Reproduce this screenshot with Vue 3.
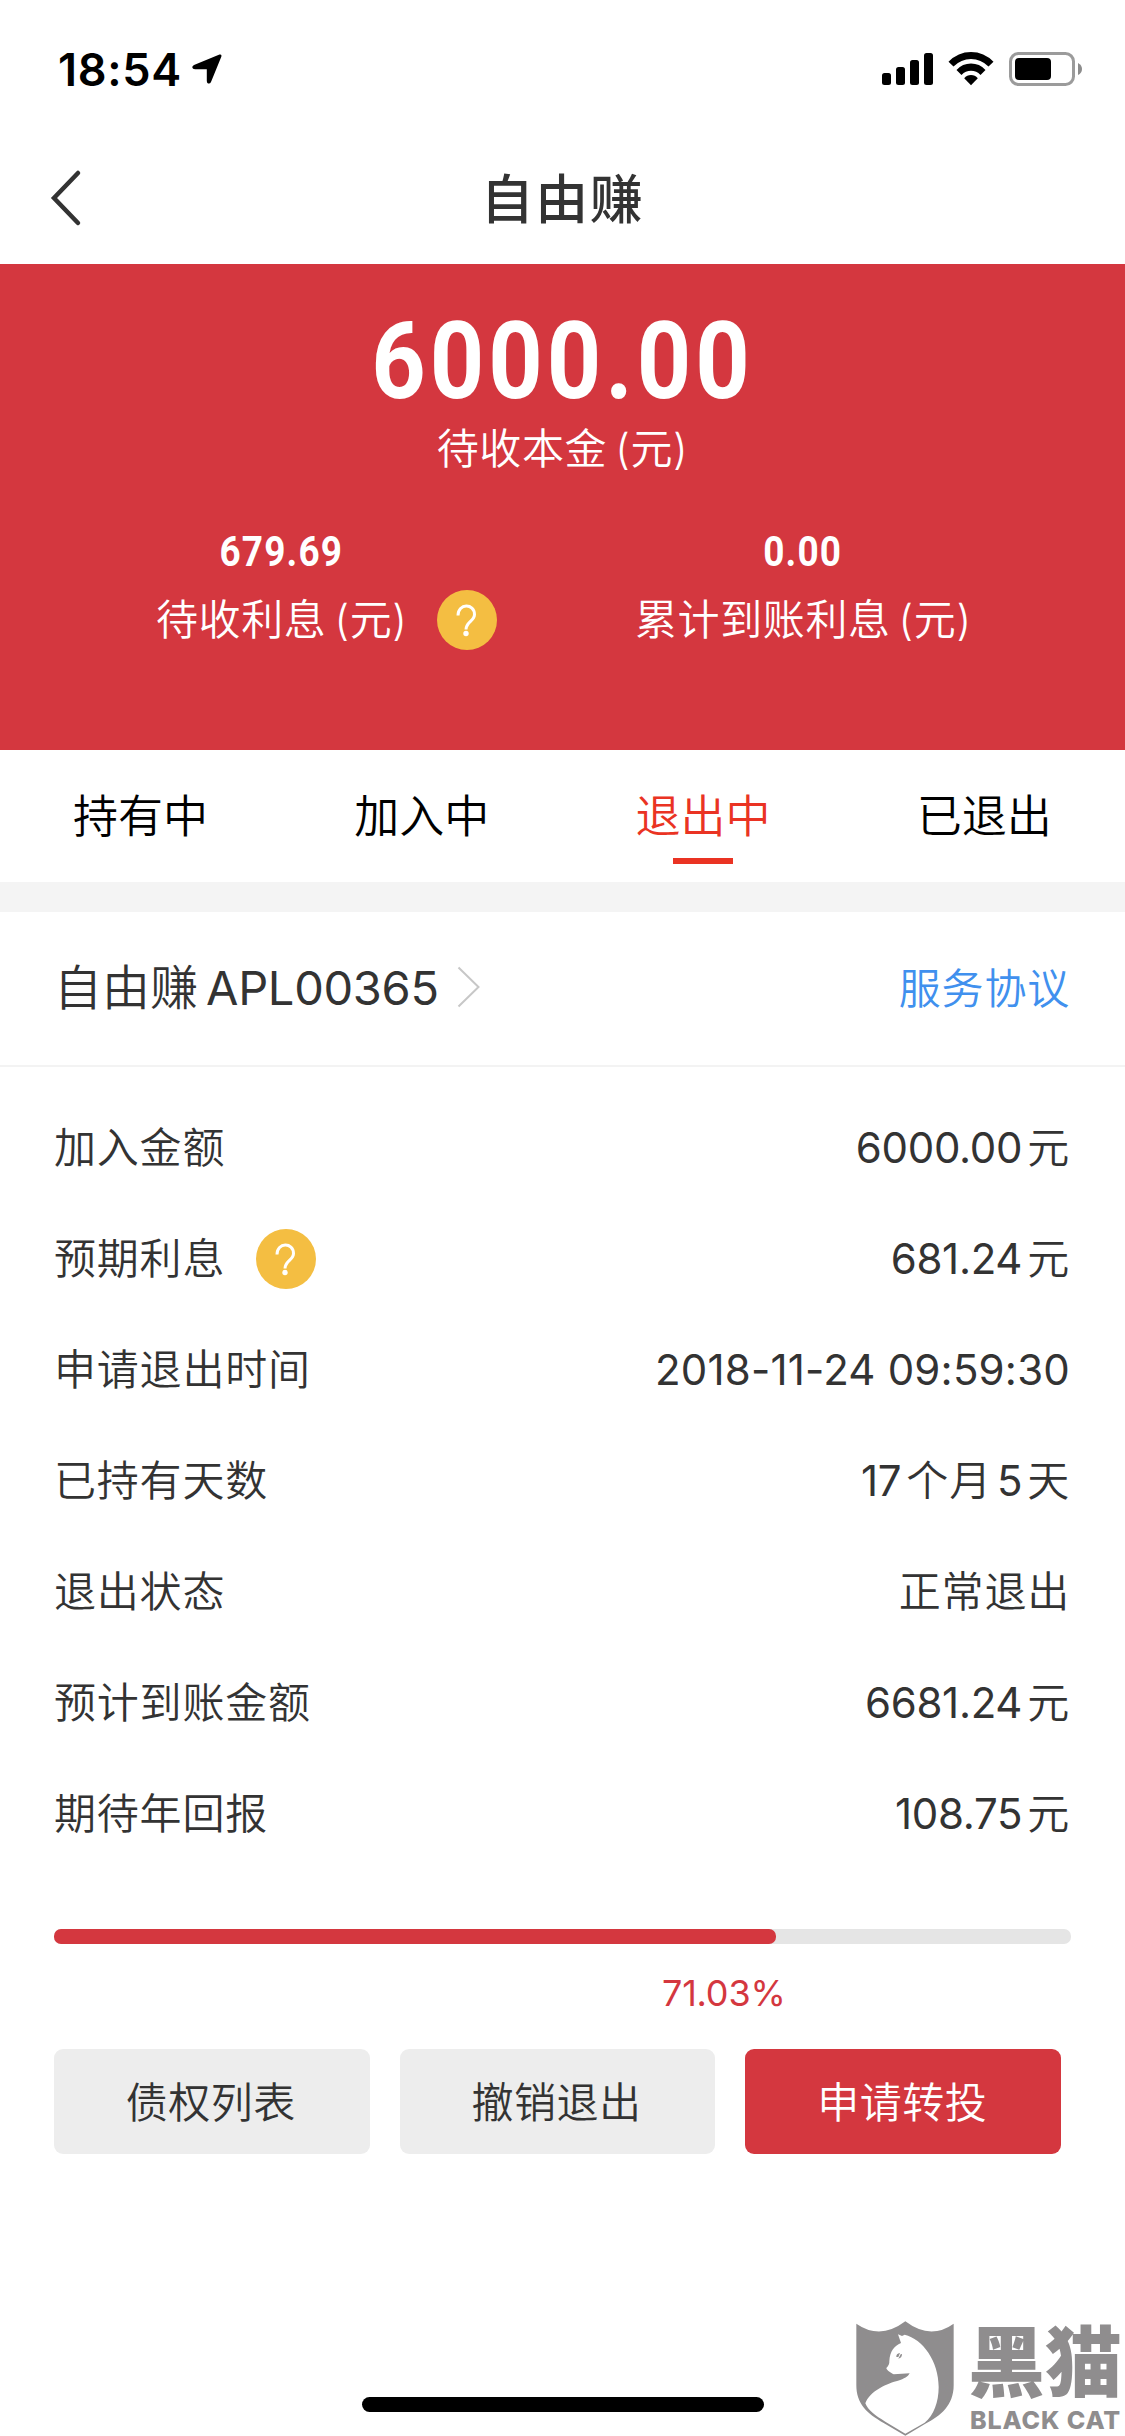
<script setup>
import { ref } from "vue";

const tabs = ["持有中", "加入中", "退出中", "已退出"]
const current = ref(2)
const percent = ref(71.03)

const rows = [
  { label: "加入金额", value: ["6000.00", "元"] },
  { label: "预期利息", value: ["681.24", "元"], help: true },
  { label: "申请退出时间", value: ["2018-11-24 09:59:30"] },
  { label: "已持有天数", value: ["17", "个月", "5", "天"] },
  { label: "退出状态", value: ["正常退出"] },
  { label: "预计到账金额", value: ["6681.24", "元"] },
  { label: "期待年回报", value: ["108.75", "元"] },
]
</script>

<template>
  <main>
    <div class="status">
      <span class="time">18:54</span>
      <svg class="location" width="30" height="30" viewBox="0 0 30 30">
        <path d="M27.500.6Q30 0 29.400 2.500L19 28Q18 30 16 29.400Q14.800 29 14.800 27V15.200H3Q.500 15 .300 13.500Q0 12 2 11Z" />
      </svg>
      <svg class="signal" width="52" height="36" viewBox="0 0 52 36">
        <rect x="0" y="22" width="9" height="12" rx="2.500" />
        <rect x="14" y="16" width="9" height="18" rx="2.500" />
        <rect x="28" y="9" width="9" height="25" rx="2.500" />
        <rect x="42" y="2" width="9" height="32" rx="2.500" />
      </svg>
      <svg class="wifi" width="46" height="36" viewBox="0 0 46 36">
        <path d="M0.500 10.800Q10 1 23 1T45.500 10.800L40.500 15.600Q33 8 23 8T5.500 15.600Z" />
        <path d="M8.500 19Q14.500 12.600 23 12.600T37.500 19L32.500 24Q28.500 19.800 23 19.800T13.500 24Z" />
        <path d="M16.200 27.300Q19 24 23 24T29.800 27.300L23 34.200Z" />
      </svg>
      <svg class="battery" width="74" height="36" viewBox="0 0 74 36">
        <rect x="1.500" y="2.500" width="63" height="31" rx="8" fill="none" stroke="#9b9b9b" stroke-width="3" />
        <rect x="6" y="7" width="36" height="22" rx="4" />
        <path d="M69 12Q73 14 73 18T69 24Z" fill="#8c8c8c" />
      </svg>
    </div>

    <header>
      <svg class="back" width="32" height="58" viewBox="0 0 32 58">
        <path d="M28 4L4 29L28 54" fill="none" stroke="#333" stroke-width="4.500" stroke-linecap="round" />
      </svg>
      <h1>自由赚</h1>
    </header>

    <section class="summary">
      <p class="total">6000.00</p>
      <p class="caption">待收本金<i>(</i>元<span>)</span></p>
      <div class="stats">
        <div class="stat">
          <b>679.69</b>
          <p class="caption">待收利息<i>(</i>元<span>)</span></p>
        </div>
        <svg class="help" width="60" height="60" viewBox="0 0 60 60">
          <circle cx="30" cy="30" r="30" fill="#f4be42" />
          <path d="M21 25.500C21 13 37.500 13 37.500 24.500C37.500 31 29 32 29 39.500" fill="none" stroke="#fff" stroke-width="3" />
          <circle cx="29" cy="43.500" r="2.700" fill="#fff" />
        </svg>
        <div class="stat received">
          <b>0.00</b>
          <p class="caption">累计到账利息<i>(</i>元<span>)</span></p>
        </div>
      </div>
    </section>

    <nav>
      <a v-for="(tab, index) in tabs" :key="tab" :class="{ active: index === current }" @click="current = index">{{ tab }}</a>
    </nav>

    <section class="product">
      <p class="name">自由赚<span>APL00365</span></p>
      <svg class="more" width="24" height="42" viewBox="0 0 24 42">
        <path d="M1.500 1.500L21.500 21L1.500 40.500" fill="none" stroke="#c7c7c7" stroke-width="2" />
      </svg>
      <a class="agreement">服务协议</a>
    </section>

    <ul>
      <li v-for="row in rows" :key="row.label">
        <span class="label">{{ row.label }}</span>
        <svg v-if="row.help" class="help" width="60" height="60" viewBox="0 0 60 60">
          <circle cx="30" cy="30" r="30" fill="#f4be42" />
          <path d="M21 25.500C21 13 37.500 13 37.500 24.500C37.500 31 29 32 29 39.500" fill="none" stroke="#fff" stroke-width="3" />
          <circle cx="29" cy="43.500" r="2.700" fill="#fff" />
        </svg>
        <span class="value">
          <span v-for="part in row.value" :key="part" :class="{ number: /\d/.test(part), date: part.includes('-') }">{{ part }}</span>
        </span>
      </li>
    </ul>

    <div class="progress">
      <div class="bar" :style="{ width: percent + '%' }"></div>
    </div>
    <p class="percent">{{ percent }}%</p>

    <div class="buttons">
      <button>债权列表</button>
      <button>撤销退出</button>
      <button class="primary">申请转投</button>
    </div>

    <div class="home"></div>

    <div class="watermark">
      <svg width="98" height="115" viewBox="92 92 294 345">
        <path d="M93 100Q165 150 240 93Q315 150 385 100V285C385 345 345 378 300 400L240 436L175 398C125 370 93 340 93 285Z" fill="#8f8d8e" />
        <path d="M218 132L230 137L238 133C292 146 340 212 340 290C340 335 325 376 298 397L240 430L180 394C150 376 128 360 120 339C132 302 190 277 218 271C236 266 249 258 253 249L205 252C197 248 184 240 183 233C189 227 193 220 192 212C194 182 206 168 227 158Z" fill="#fff" />
        <path d="M213 200Q212 190 224 188L219 200ZM230 191Q230 203 219 205L226 192Z" fill="#8f8d8e" />
      </svg>
      <div class="brand">
        <strong>黑猫</strong>
        <em>BLACK CAT</em>
      </div>
    </div>
  </main>
</template>

<style>
body {
  margin: 0;
  background: #fff;
}
</style>

<style scoped>
main {
  position: relative;
  width: 1125px;
  height: 2436px;
  overflow: hidden;
  background: #fff;
  color: #333;
  font-family: Inter, "Noto Sans CJK SC", sans-serif;
  font-size: 42px;
  font-weight: 350;
}

p, h1, ul {
  margin: 0;
  padding: 0;
}

svg {
  display: block;
  flex-shrink: 0;
}

.status {
  display: flex;
  align-items: center;
  height: 138px;
  padding: 0 42px 0 58px;
  box-sizing: border-box;
}

.time {
  width: 134px;
  color: #000;
  font-size: 45px;
  font-weight: 600;
  letter-spacing: 0.700px;
}

.signal {
  margin-left: auto;
}

.wifi {
  margin: 0 15px 0 14px;
}

header {
  display: flex;
  align-items: center;
  height: 126px;
  padding: 0 50px;
}

header .back {
  margin-top: -6px;
}

h1 {
  flex: 1;
  margin: -11px 32px 0 0;
  text-align: center;
  font-size: 53px;
  font-weight: 500;
  letter-spacing: 1.500px;
}

.summary {
  height: 486px;
  padding-top: 37px;
  box-sizing: border-box;
  background: #d4373f;
  color: #fff;
}

.total {
  height: 118px;
  line-height: 120px;
  text-align: center;
  font-family: Roboto, sans-serif;
  font-size: 108px;
  font-weight: 700;
  letter-spacing: 4.500px;
  transform: scaleX(0.88);
}

.caption {
  height: 60px;
  line-height: 60px;
  text-align: center;
  white-space: nowrap;
  letter-spacing: 0.600px;
}

.caption i {
  margin-left: 8px;
  font-style: normal;
}

.stats {
  display: flex;
  align-items: flex-end;
  margin-top: 45px;
  padding-left: 156px;
}

.stat {
  width: 248px;
  text-align: center;
}

.stat b {
  display: block;
  height: 66px;
  line-height: 56px;
  padding-left: 3px;
  font-family: Roboto, sans-serif;
  font-size: 42px;
  font-weight: 700;
  letter-spacing: 1.300px;
  transform: scaleX(0.88);
}

.stats .help {
  margin-left: 33px;
}

.received {
  width: 330px;
  margin-left: 138px;
}

.received b {
  padding-left: 6px;
}

nav {
  display: flex;
  height: 132px;
  border-bottom: 30px solid #f4f4f4;
}

nav a {
  position: relative;
  flex: 1;
  line-height: 134px;
  text-align: center;
  color: #000;
  font-size: 45px;
}

nav .active {
  color: #ea3323;
}

nav .active::after {
  content: "";
  position: absolute;
  left: 50%;
  bottom: 18px;
  width: 60px;
  height: 6px;
  margin-left: -30px;
  background: #ea3323;
}

.product {
  display: flex;
  align-items: center;
  height: 153px;
  padding: 0 55px 0 54px;
  border-bottom: 2px solid #f3f3f3;
}

.name {
  margin-top: -9px;
  font-size: 48px;
}

.name span {
  margin-left: 8px;
  font-size: 47px;
  font-weight: 400;
  letter-spacing: -0.300px;
}

.more {
  margin: -3px 0 0 18px;
}

.agreement {
  margin: -7px 0 0 auto;
  color: #4090ee;
  letter-spacing: 0.800px;
}

ul {
  padding: 25px 55px 0 54px;
  list-style: none;
}

li {
  display: flex;
  align-items: center;
  height: 111px;
  line-height: 60px;
  letter-spacing: 0.800px;
}

.label {
  margin-top: 1px;
}

li .help {
  margin-left: 31px;
}

.value {
  display: flex;
  align-items: baseline;
  gap: 5px;
  margin: 0 0 0 auto;
}

.number {
  font-weight: 400;
  letter-spacing: -0.300px;
}

.number.date {
  letter-spacing: 0.200px;
}

.progress {
  height: 15px;
  margin: 60px 54px 0;
  border-radius: 7px;
  background: #e5e5e5;
}

.bar {
  height: 15px;
  border-radius: 7px;
  background: #d4373f;
}

.percent {
  margin: 20px 0 0 662px;
  height: 85px;
  line-height: 58px;
  color: #d4373f;
  font-size: 36px;
  font-weight: 400;
  letter-spacing: -0.200px;
}

.buttons {
  display: flex;
  gap: 30px;
  padding: 0 64px 0 54px;
}

button {
  flex: 1;
  height: 105px;
  padding: 0 2px 4px 0;
  border: none;
  border-radius: 9px;
  background: #ededed;
  color: #333;
  font: inherit;
  letter-spacing: 0.500px;
}

.primary {
  background: #d4373f;
  color: #fff;
}

.home {
  width: 402px;
  height: 15px;
  margin: 243px auto 0;
  border-radius: 8px;
  background: #000;
}

.watermark {
  position: absolute;
  right: 2px;
  bottom: 0;
  display: flex;
  gap: 16px;
  color: #8f8d8e;
}

.brand {
  width: 153px;
  white-space: nowrap;
}

.brand strong {
  display: block;
  height: 84px;
  margin-left: -2px;
  line-height: 84px;
  font-size: 77px;
  font-weight: 900;
}

.brand em {
  display: block;
  line-height: 30px;
  font-size: 25px;
  font-style: normal;
  font-weight: 800;
  letter-spacing: 0.900px;
}
</style>
